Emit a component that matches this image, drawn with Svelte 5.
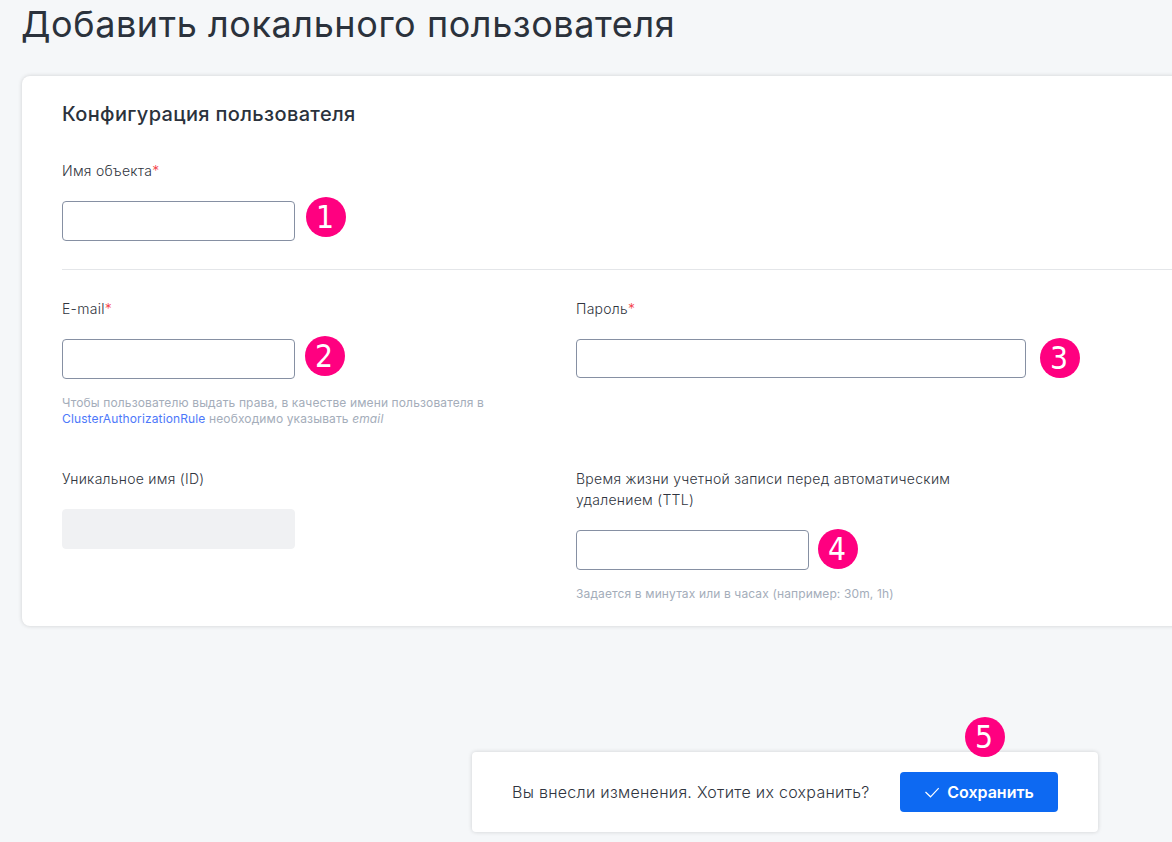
<script>
    let name = '';
    let email = '';
    let password = '';
    let ttl = '';
</script>

<div class="page">
    <h1>Добавить локального пользователя</h1>

    <div class="card">
        <h2>Конфигурация пользователя</h2>

        <div class="field">
            <label for="name">Имя объекта<span class="required">*</span></label>
            <div class="control">
                <input id="name" type="text" bind:value={name}>
                <span class="badge first">1</span>
            </div>
        </div>

        <div class="hr"></div>

        <div class="grid">
            <div class="field">
                <label for="email">E-mail<span class="required">*</span></label>
                <div class="control">
                    <input id="email" type="text" bind:value={email}>
                    <span class="badge second">2</span>
                </div>
                <p class="hint">
                    Чтобы пользователю выдать права, в качестве имени пользователя в
                    <a href="#rule">ClusterAuthorizationRule</a> необходимо указывать <em>email</em>
                </p>
            </div>

            <div class="field">
                <label for="password">Пароль<span class="required">*</span></label>
                <div class="control wide">
                    <input id="password" type="password" bind:value={password}>
                    <span class="badge third">3</span>
                </div>
            </div>

            <div class="field">
                <label for="id">Уникальное имя (ID)</label>
                <div class="control">
                    <input id="id" type="text" disabled>
                </div>
            </div>

            <div class="field">
                <label for="ttl">Время жизни учетной записи перед автоматическим удалением (TTL)</label>
                <div class="control">
                    <input id="ttl" type="text" bind:value={ttl}>
                    <span class="badge fourth">4</span>
                </div>
                <p class="hint">Задается в минутах или в часах (например: 30m, 1h)</p>
            </div>
        </div>
    </div>

    <div class="save">
        <span class="message">Вы внесли изменения. Хотите их сохранить?</span>

        <button>
            <svg width="16" height="16" viewBox="0 0 16 16">
                <path d="M1.5 8 L6.5 12.8 L14.7 4.2" />
            </svg>
            Сохранить
        </button>

        <span class="badge fifth">5</span>
    </div>
</div>

<style>
    :global(body) {
        background: #f5f7f9;
        overflow: hidden;
    }

    .page {
        box-sizing: border-box;
        height: 842px;
        padding-left: 22px;
        overflow: hidden;
        font-family: Inter, sans-serif;
        color: #303540;
    }

    h1 {
        margin: 0 0 0 -1px;
        height: 76px;
        font-size: 36px;
        font-weight: 400;
        line-height: 48px;
        letter-spacing: .58px;
        color: #2b323c;
        white-space: nowrap;
    }

    .card {
        box-sizing: border-box;
        width: 1240px;
        height: 550px;
        padding: 24px 40px;
        background: #fff;
        border-radius: 8px;
        box-shadow: 0 0 4px rgba(0, 0, 0, .16);
    }

    h2 {
        margin: 0 0 32px;
        font-size: 20px;
        font-weight: 500;
        line-height: 28px;
        letter-spacing: .35px;
        color: #2b323c;
    }

    .field {
        display: flex;
        flex-direction: column;
        align-items: flex-start;
    }

    label {
        max-width: 400px;
        margin-bottom: 20px;
        font-size: 14px;
        font-weight: 300;
        line-height: 21px;
        letter-spacing: .27px;
    }

    .required {
        color: #f43f4a;
    }

    .control {
        position: relative;
        width: 233px;
        height: 40px;
    }

    .wide {
        width: 450px;
        height: 39px;
    }

    input {
        display: block;
        box-sizing: border-box;
        width: 100%;
        height: 100%;
        padding: 0 12px;
        font: inherit;
        font-size: 14px;
        background: #fff;
        border: 1px solid #8690a3;
        border-radius: 4px;
    }

    input:disabled {
        background: #f0f1f3;
        border-color: #f0f1f3;
    }

    .hr {
        height: 1px;
        margin: 28px 0;
        background: #e4e6e9;
    }

    .grid {
        display: grid;
        grid-template-columns: 450px 450px;
        gap: 41px 64px;
    }

    .hint {
        margin: 16px 0 0;
        font-size: 12px;
        line-height: 16px;
        letter-spacing: .13px;
        color: #a4adba;
    }

    .hint a {
        color: #4d78fa;
        text-decoration: none;
    }

    .save {
        position: relative;
        display: flex;
        align-items: center;
        justify-content: space-between;
        box-sizing: border-box;
        width: 626px;
        height: 80px;
        margin: 126px 0 0 450px;
        padding: 0 40px;
        background: #fff;
        border-radius: 4px;
        box-shadow: 0 0 4px rgba(0, 0, 0, .16);
    }

    .message {
        font-size: 16px;
        font-weight: 300;
        letter-spacing: .28px;
        white-space: nowrap;
    }

    button {
        display: flex;
        align-items: center;
        justify-content: center;
        gap: 7px;
        width: 158px;
        height: 40px;
        padding: 0;
        font: 600 16px Inter, sans-serif;
        color: #fff;
        background: #0d69f2;
        border: 0;
        border-radius: 4px;
    }

    path {
        fill: none;
        stroke: #fff;
        stroke-width: 1.2;
    }

    .badge {
        position: absolute;
        width: 40px;
        height: 40px;
        font-family: "DejaVu Sans Condensed", "DejaVu Sans", sans-serif;
        font-size: 31.5px;
        font-stretch: condensed;
        line-height: 41px;
        text-align: center;
        text-indent: -2px;
        color: #fff;
        background: #ff0080;
        border-radius: 50%;
    }

    .first {
        top: -4px;
        left: 244px;
    }

    .second {
        top: -3px;
        left: 243px;
    }

    .third {
        top: -1px;
        left: 464px;
    }

    .fourth {
        top: -1px;
        left: 242px;
    }

    .fifth {
        top: -35px;
        left: 493px;
    }
</style>
